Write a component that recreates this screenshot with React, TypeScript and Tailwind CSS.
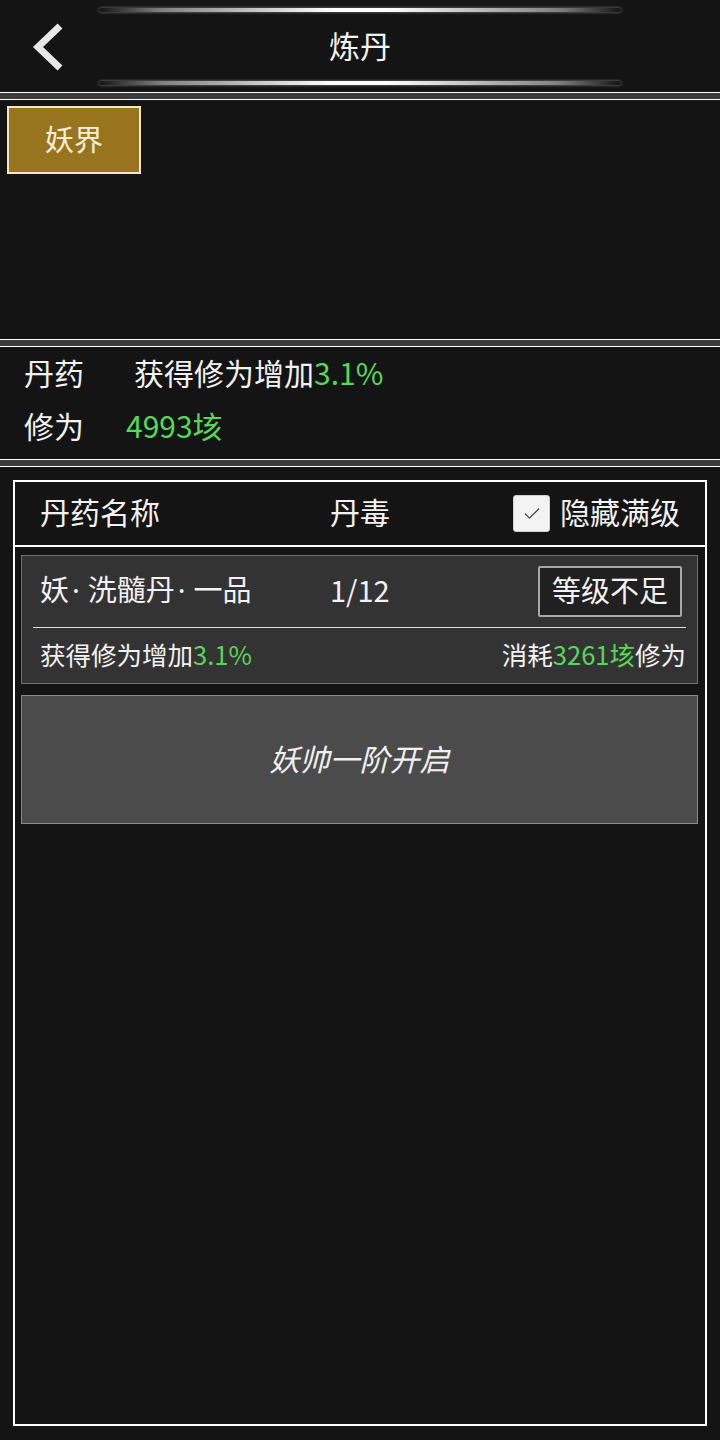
import React from 'react';
import { Check } from 'lucide-react';

const font = { fontFamily: '"Noto Sans CJK SC", "Noto Sans", sans-serif' };

// thin white/grey/white band between sections
const Separator: React.FC = () => (
  <div className="h-[8px] shrink-0 border-y border-white bg-[#3b3b3b]" />
);

const GlowLine: React.FC = () => (
  <div className="mx-auto h-[4px] w-[522px] rounded-full bg-[linear-gradient(90deg,rgba(255,255,255,0)_0%,rgba(200,200,200,0.6)_12%,#ffffff_45%,#ffffff_55%,rgba(200,200,200,0.6)_88%,rgba(255,255,255,0)_100%)] shadow-[0_0_3px_rgba(255,255,255,0.5)]" />
);

const Green: React.FC<{ children: React.ReactNode }> = ({ children }) => (
  <span className="text-[#56d856]">{children}</span>
);

// narrow latin middle dot
const Dot: React.FC = () => (
  <span className="pl-[3px] pr-[8px]" style={{ fontFamily: '"Noto Sans", sans-serif' }}>
    ·
  </span>
);

const App: React.FC = () => {
  return (
    <div style={font} className="flex h-[1440px] w-[720px] flex-col bg-[#141414] text-[#f2f2f2]">
      {/* Header */}
      <div className="flex h-[92px] shrink-0 flex-col pt-[8px] pb-[7px]">
        <GlowLine />
        <div className="flex flex-1 items-center">
          <div className="flex w-[100px] pl-[28px]">
            <svg width="40" height="50" viewBox="0 0 40 50">
              <polyline points="32,4 10,25 32,46" fill="none" stroke="#e8e8e8" strokeWidth="7" />
            </svg>
          </div>
          <div className="flex-1 pb-[4px] text-center text-[31px] leading-none">炼丹</div>
          <div className="w-[100px]" />
        </div>
        <GlowLine />
      </div>

      <Separator />

      {/* Tabs */}
      <div className="h-[239px] shrink-0 pl-[7px] pt-[6px]">
        <div className="flex h-[68px] w-[134px] items-center justify-center border-2 border-[#f3e9c8] bg-[#99741f] pb-[3px] text-[29px] leading-none text-[#f6efd8]">
          妖界
        </div>
      </div>

      <Separator />

      {/* Info */}
      <div className="flex h-[112px] shrink-0 flex-col pl-[24px] text-[30px] leading-none">
        <div className="flex h-[53px] items-center pb-[4px]">
          <span className="w-[110px]">丹药</span>
          <span>
            获得修为增加<Green>3.1%</Green>
          </span>
        </div>
        <div className="flex h-[53px] items-center pb-[4px]">
          <span className="w-[102px]">修为</span>
          <Green>4993垓</Green>
        </div>
      </div>

      <Separator />

      {/* List panel */}
      <div className="flex flex-1 flex-col px-[13px] pt-[13px] pb-[14px]">
        <div className="flex flex-1 flex-col border-2 border-white">
          <div className="flex h-[65px] shrink-0 items-center border-b-2 border-white pl-[25px] pr-[25px] text-[30px] leading-none">
            <span className="w-[290px] pb-[5px]">丹药名称</span>
            <span className="pb-[5px]">丹毒</span>
            <div className="ml-auto flex items-center gap-[10px]">
              <div className="flex h-[37px] w-[37px] items-center justify-center rounded-[3px] border border-[#cfcfcf] bg-[#f3f3f3]">
                <Check size={20} strokeWidth={1.5} color="#444444" />
              </div>
              <span className="pb-[5px]">隐藏满级</span>
            </div>
          </div>

          <div className="flex flex-col gap-[11px] pl-[6px] pr-[7px] pt-[8px]">
            {/* Pill item */}
            <div className="flex h-[129px] flex-col border border-[#707070] bg-[#333333]">
              <div className="flex h-[71px] items-center pl-[18px] pr-[15px] text-[29px] leading-none">
                <span className="w-[290px] pb-[5px]">
                  妖<Dot />洗髓丹<Dot />一品
                </span>
                <span className="pb-[5px]">1/12</span>
                <div className="ml-auto flex h-[51px] w-[144px] items-center justify-center rounded-[2px] border-2 border-[#a8a8a8] bg-[#202020] pb-[4px]">
                  等级不足
                </div>
              </div>
              <div className="mx-[11px] h-px bg-[#e0e0e0]" />
              <div className="flex flex-1 items-center justify-between pb-[3px] pl-[18px] pr-[11px] text-[25.5px] leading-none">
                <span>
                  获得修为增加<Green>3.1%</Green>
                </span>
                <span>
                  消耗<Green>3261垓</Green>修为
                </span>
              </div>
            </div>

            {/* Locked tier */}
            <div className="flex h-[129px] items-center justify-center border border-[#8a8a8a] bg-[#4b4b4b] pb-[4px] text-[30px] italic leading-none text-[#f0f0f0]">
              妖帅一阶开启
            </div>
          </div>
        </div>
      </div>
    </div>
  );
};

export default App;
